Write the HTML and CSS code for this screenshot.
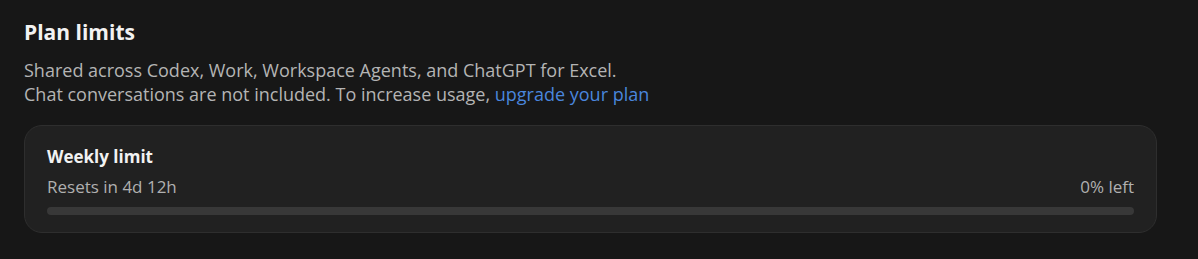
FILE: index.html
```html
<!DOCTYPE html>
<html>
<head>
<meta charset="utf-8">
<link rel="stylesheet" href="styles.css">
</head>
<body>
<section class="limits">
  <h2 class="title">Plan limits</h2>
  <p class="desc">Shared across Codex, Work, Workspace Agents, and ChatGPT for Excel.<br>Chat conversations are not included. To increase usage, <a class="link" href="#">upgrade your plan</a></p>
  <div class="card">
    <div class="card-title">Weekly limit</div>
    <div class="row">
      <span class="muted">Resets in 4d 12h</span>
      <span class="muted">0% left</span>
    </div>
    <div class="bar"><div class="fill" style="width:0%"></div></div>
  </div>
</section>
</body>
</html>
```
FILE: styles.css
```css
html, body {
  margin: 0;
  padding: 0;
  background: #171717;
  height: 100%;
}
body {
  font-family: "Open Sans", "Noto Sans", sans-serif;
  color: #ececec;
}
.limits {
  padding: 18px 41px 0 24px;
}
.title {
  margin: 0;
  font-size: 21px;
  font-weight: 700;
  line-height: 28px;
  color: #f2f2f2;
}
.desc {
  margin: 12px 0 0;
  font-size: 18px;
  line-height: 24px;
  color: #b4b4b4;
}
.link {
  color: #4a86dd;
  text-decoration: none;
}
.card {
  margin-top: 19px;
  background: #212121;
  border: 1px solid #2e2e2e;
  border-radius: 18px;
  padding: 19px 22px 17px;
}
.card-title {
  font-size: 17px;
  font-weight: 700;
  line-height: 24px;
  color: #f2f2f2;
}
.row {
  display: flex;
  justify-content: space-between;
  margin-top: 6px;
}
.muted {
  font-size: 17px;
  line-height: 24px;
  color: #b0b0b0;
}
.bar {
  margin-top: 8px;
  height: 8px;
  border-radius: 4px;
  background: #383838;
  overflow: hidden;
}
.fill {
  height: 100%;
  background: #4a86dd;
}
```
